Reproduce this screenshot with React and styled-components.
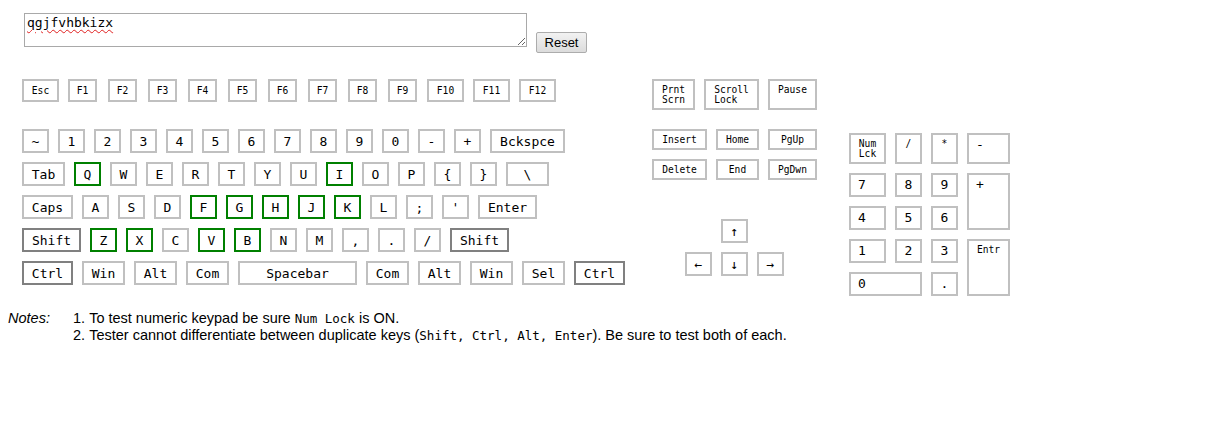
import React from 'react';
import styled, { createGlobalStyle } from 'styled-components';

const GlobalStyle = createGlobalStyle`
  body {
    margin: 0;
    background: #fff;
    font-family: "Liberation Sans", Arial, sans-serif;
  }
`;

const Page = styled.div`
  padding: 13px 0 0 0;
`;

const TopRow = styled.div`
  display: flex;
  align-items: flex-start;
  padding-left: 24px;
`;

const TypeBox = styled.textarea`
  box-sizing: border-box;
  width: 503px;
  height: 34px;
  border: 1px solid #a9a9a9;
  padding: 1px 2px;
  font-family: "DejaVu Sans Mono", monospace;
  font-size: 13px;
  line-height: 15px;
  color: #000;
  text-decoration: underline wavy #e02020;
  text-decoration-thickness: 1px;
  text-underline-offset: 2px;
  outline: none;
`;

const ResetButton = styled.button`
  box-sizing: border-box;
  margin: 19px 0 0 9px;
  width: 51px;
  height: 21px;
  padding: 0;
  border: 1px solid #acacac;
  border-radius: 2px;
  background: linear-gradient(#f2f2f2, #dcdcdc);
  font-family: "Liberation Sans", Arial, sans-serif;
  font-size: 13px;
  color: #000;
`;

const Board = styled.div`
  display: flex;
  align-items: flex-start;
  margin-top: 26px;
  padding-left: 22px;
`;

const MainBlock = styled.div`
  display: flex;
  flex-direction: column;
`;

const FRow = styled.div`
  display: flex;
  margin-bottom: 27px;
`;

const KeyRows = styled.div`
  display: flex;
  flex-direction: column;
  gap: 9px;
`;

const KeyRow = styled.div`
  display: flex;
  gap: 9px;
`;

const borderFor = (state) => {
  if (state === 'hit') return '#008000';
  if (state === 'dup') return '#808080';
  return '#c0c0c0';
};

const Key = styled.div`
  box-sizing: border-box;
  flex: none;
  width: ${(p) => p.$w || 27}px;
  height: ${(p) => p.$h || 24}px;
  margin-left: ${(p) => p.$ml || 0}px;
  border: 2px solid ${(p) => borderFor(p.$state)};
  display: flex;
  align-items: center;
  justify-content: center;
  font-family: "DejaVu Sans Mono", monospace;
  font-size: ${(p) => p.$fs || 13}px;
  color: #000;
  white-space: pre;
`;

const NavBlock = styled.div`
  display: flex;
  flex-direction: column;
  margin-left: 27px;
`;

const NavRow = styled.div`
  display: flex;
  gap: 9px;
  margin-top: ${(p) => p.$mt || 0}px;
  justify-content: ${(p) => (p.$center ? 'center' : 'flex-start')};
`;

const NavKey = styled.div`
  box-sizing: border-box;
  width: ${(p) => p.$w}px;
  height: ${(p) => p.$h || 21}px;
  border: 2px solid #c0c0c0;
  display: flex;
  align-items: ${(p) => (p.$top ? 'flex-start' : 'center')};
  justify-content: center;
  padding-top: ${(p) => (p.$top ? 4 : 0)}px;
  font-family: "DejaVu Sans Mono", monospace;
  font-size: 9.6px;
  line-height: 10px;
  color: #000;
  white-space: pre;
`;

const Stack = styled.span`
  display: flex;
  flex-direction: column;
  align-items: ${(p) => (p.$center ? 'center' : 'flex-start')};
`;

const ArrowKey = styled.div`
  box-sizing: border-box;
  width: 27px;
  height: 24px;
  border: 2px solid #c0c0c0;
  display: flex;
  align-items: center;
  justify-content: center;
  font-family: "DejaVu Sans Mono", monospace;
  font-size: 13px;
  color: #000;
`;

const NumPad = styled.div`
  display: grid;
  grid-template-columns: 37px 27px 27px 43px;
  grid-template-rows: 31px 24px 24px 24px 24px;
  gap: 9px;
  margin: 54px 0 0 32px;
`;

const PadKey = styled.div`
  box-sizing: border-box;
  grid-column: ${(p) => p.$col || 'auto'};
  grid-row: ${(p) => p.$row || 'auto'};
  border: 2px solid #c0c0c0;
  display: flex;
  align-items: flex-start;
  justify-content: ${(p) => (p.$left ? 'flex-start' : 'center')};
  padding: ${(p) => (p.$small ? '4px 0 0' : '2px 0 0')};
  padding-left: ${(p) => (p.$left ? 7 : 0)}px;
  font-family: "DejaVu Sans Mono", monospace;
  font-size: ${(p) => (p.$small ? 9.6 : 13)}px;
  line-height: ${(p) => (p.$small ? '10px' : '16px')};
  color: #000;
  white-space: pre;
`;

const Notes = styled.div`
  display: flex;
  margin-top: 14px;
  padding-left: 8px;
  font-size: 14.5px;
  line-height: 16px;
  color: #000;
`;

const NotesLabel = styled.div`
  width: 65px;
  font-style: italic;
`;

const NoteList = styled.ol`
  margin: 0;
  padding: 0;
  list-style-position: inside;
`;

const Code = styled.code`
  font-family: "DejaVu Sans Mono", monospace;
  font-size: 12.5px;
`;

const pressed = new Set(['Q', 'I', 'F', 'G', 'H', 'J', 'K', 'Z', 'X', 'V', 'B']);

const fKeys = [
  { label: 'Esc', w: 37 },
  { label: 'F1', w: 29, ml: 9 },
  { label: 'F2', w: 29, ml: 11 },
  { label: 'F3', w: 29, ml: 11 },
  { label: 'F4', w: 29, ml: 11 },
  { label: 'F5', w: 29, ml: 11 },
  { label: 'F6', w: 29, ml: 11 },
  { label: 'F7', w: 29, ml: 11 },
  { label: 'F8', w: 29, ml: 11 },
  { label: 'F9', w: 29, ml: 11 },
  { label: 'F10', w: 37, ml: 10 },
  { label: 'F11', w: 37, ml: 9 },
  { label: 'F12', w: 37, ml: 9 },
];

const chars = (s) => s.split('').map((c) => ({ label: c }));

const rows = [
  [...chars('~1234567890-+'), { label: 'Bckspce', w: 75 }],
  [{ label: 'Tab', w: 43 }, ...chars('QWERTYUIOP{}'), { label: '\\', w: 43 }],
  [{ label: 'Caps', w: 51 }, ...chars("ASDFGHJKL;'"), { label: 'Enter', w: 59 }],
  [{ label: 'Shift', w: 59, state: 'dup' }, ...chars('ZXCVBNM,./'), { label: 'Shift', w: 59, state: 'dup' }],
  [
    { label: 'Ctrl', w: 51, state: 'dup' },
    { label: 'Win', w: 43 },
    { label: 'Alt', w: 43 },
    { label: 'Com', w: 43 },
    { label: 'Spacebar', w: 119 },
    { label: 'Com', w: 43 },
    { label: 'Alt', w: 43 },
    { label: 'Win', w: 43 },
    { label: 'Sel', w: 43 },
    { label: 'Ctrl', w: 51, state: 'dup' },
  ],
];

function App() {
  return (
    <Page>
      <GlobalStyle />
      <TopRow>
        <TypeBox defaultValue="qgjfvhbkizx" spellCheck={false} />
        <ResetButton type="button">Reset</ResetButton>
      </TopRow>

      <Board>
        <MainBlock>
          <FRow>
            {fKeys.map((k) => (
              <Key key={k.label} $w={k.w} $h={23} $ml={k.ml} $fs={9.6}>{k.label}</Key>
            ))}
          </FRow>
          <KeyRows>
            {rows.map((row, i) => (
              <KeyRow key={i}>
                {row.map((k, j) => (
                  <Key
                    key={j}
                    $w={k.w}
                    $state={k.state || (pressed.has(k.label) ? 'hit' : '')}
                  >
                    {k.label}
                  </Key>
                ))}
              </KeyRow>
            ))}
          </KeyRows>
        </MainBlock>

        <NavBlock>
          <NavRow>
            <NavKey $w={43} $h={31} $top><Stack><span>Prnt</span><span>Scrn</span></Stack></NavKey>
            <NavKey $w={55} $h={31} $top><Stack><span>Scroll</span><span>Lock</span></Stack></NavKey>
            <NavKey $w={49} $h={31} $top>Pause</NavKey>
          </NavRow>
          <NavRow $mt={19}>
            <NavKey $w={55}>Insert</NavKey>
            <NavKey $w={43}>Home</NavKey>
            <NavKey $w={49}>PgUp</NavKey>
          </NavRow>
          <NavRow $mt={9}>
            <NavKey $w={55}>Delete</NavKey>
            <NavKey $w={43}>End</NavKey>
            <NavKey $w={49}>PgDwn</NavKey>
          </NavRow>
          <NavRow $mt={39} $center>
            <ArrowKey>↑</ArrowKey>
          </NavRow>
          <NavRow $mt={9} $center>
            <ArrowKey>←</ArrowKey>
            <ArrowKey>↓</ArrowKey>
            <ArrowKey>→</ArrowKey>
          </NavRow>
        </NavBlock>

        <NumPad>
          <PadKey $small><Stack $center><span>Num</span><span>Lck</span></Stack></PadKey>
          <PadKey $small>/</PadKey>
          <PadKey $small>*</PadKey>
          <PadKey $left>-</PadKey>
          <PadKey $left>7</PadKey>
          <PadKey>8</PadKey>
          <PadKey>9</PadKey>
          <PadKey $left $row="span 2">+</PadKey>
          <PadKey $left>4</PadKey>
          <PadKey>5</PadKey>
          <PadKey>6</PadKey>
          <PadKey $left>1</PadKey>
          <PadKey>2</PadKey>
          <PadKey>3</PadKey>
          <PadKey $small $row="span 2">Entr</PadKey>
          <PadKey $left $col="span 2">0</PadKey>
          <PadKey>.</PadKey>
        </NumPad>
      </Board>

      <Notes>
        <NotesLabel>Notes:</NotesLabel>
        <NoteList>
          <li>To test numeric keypad be sure <Code>Num Lock</Code> is ON.</li>
          <li>
            Tester cannot differentiate between duplicate keys (<Code>Shift, Ctrl, Alt, Enter</Code>).
            Be sure to test both of each.
          </li>
        </NoteList>
      </Notes>
    </Page>
  );
}

export default App;
